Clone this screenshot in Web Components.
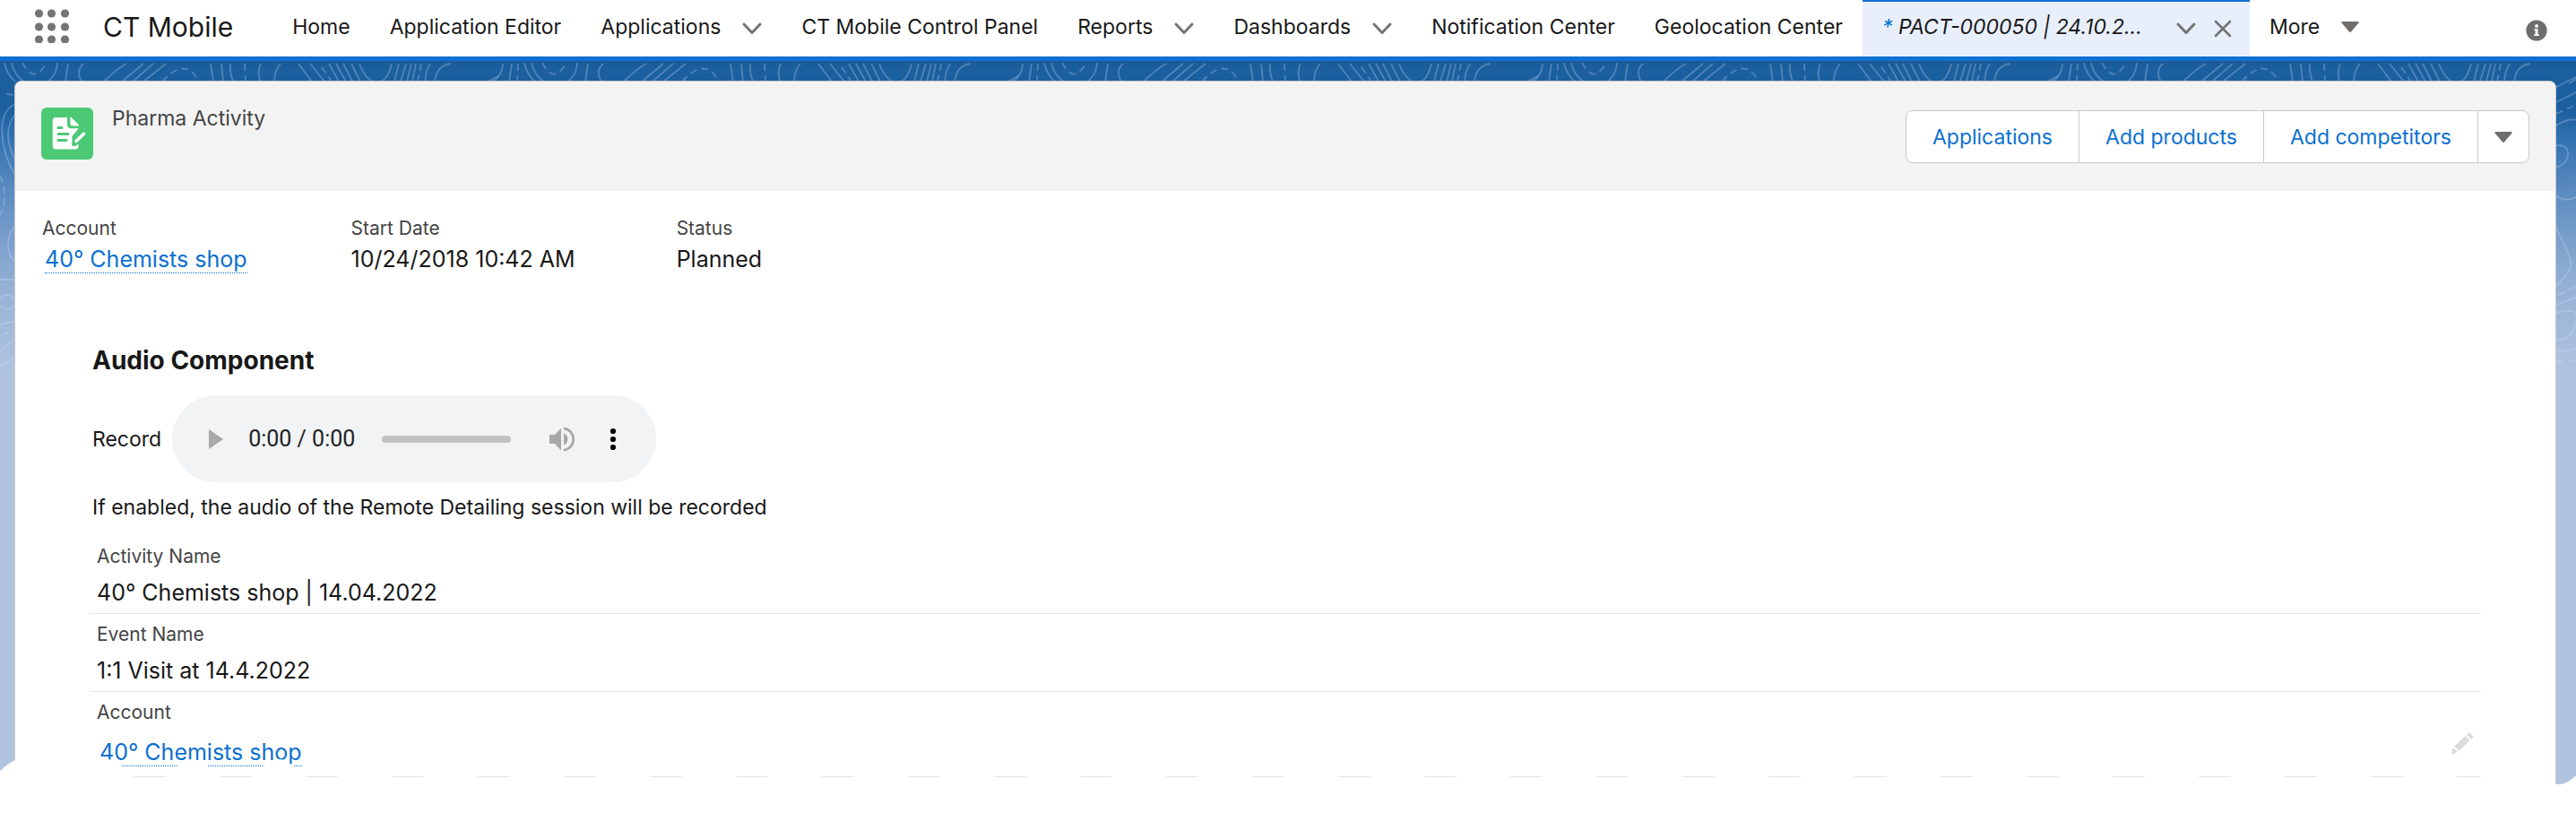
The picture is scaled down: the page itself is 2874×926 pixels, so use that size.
<!DOCTYPE html>
<html lang="en">
<head>
<meta charset="utf-8">
<title>CT Mobile</title>
<style>
  body { margin: 0; background: #fff; color: #181818; font-family: Inter, "Liberation Sans", sans-serif; font-size: 23px; }
</style>
</head>
<body>
<ct-app-bar>
  <ct-nav-item>Home</ct-nav-item>
  <ct-nav-item>Application Editor</ct-nav-item>
  <ct-nav-item menu>Applications</ct-nav-item>
  <ct-nav-item>CT Mobile Control Panel</ct-nav-item>
  <ct-nav-item menu>Reports</ct-nav-item>
  <ct-nav-item menu>Dashboards</ct-nav-item>
  <ct-nav-item>Notification Center</ct-nav-item>
  <ct-nav-item>Geolocation Center</ct-nav-item>
  <ct-nav-tab>PACT-000050 | 24.10.2...</ct-nav-tab>
  <ct-nav-more>More</ct-nav-more>
</ct-app-bar>
<ct-backdrop>
  <ct-record-card>
    <ct-record-header slot="header">
      <span slot="title">Pharma Activity</span>
      <ct-button-group slot="actions"></ct-button-group>
    </ct-record-header>
    <ct-summary slot="summary">
      <ct-summary-field><span slot="label">Account</span><ct-record-link>40° Chemists shop</ct-record-link></ct-summary-field>
      <ct-summary-field><span slot="label">Start Date</span>10/24/2018 10:42 AM</ct-summary-field>
      <ct-summary-field><span slot="label">Status</span>Planned</ct-summary-field>
    </ct-summary>
    <ct-audio-section>
      <span slot="heading">Audio Component</span>
      <span slot="label">Record</span>
      <ct-audio-player slot="player"></ct-audio-player>
      <span slot="hint">If enabled, the audio of the Remote Detailing session will be recorded</span>
    </ct-audio-section>
    <ct-detail-row><span slot="label">Activity Name</span>40° Chemists shop | 14.04.2022</ct-detail-row>
    <ct-detail-row><span slot="label">Event Name</span>1:1 Visit at 14.4.2022</ct-detail-row>
    <ct-detail-row editable><span slot="label">Account</span><ct-record-link>40° Chemists shop</ct-record-link></ct-detail-row>
  </ct-record-card>
</ct-backdrop>

<script>
const RESET = `
  :host, *, *::before, *::after { box-sizing: border-box; }
  button { font: inherit; color: inherit; background: none; border: 0; margin: 0; padding: 0; display: flex; align-items: center; justify-content: center; cursor: pointer; }
  a { color: inherit; text-decoration: none; }
  svg { display: block; }
`;

const CHEVRON = `<svg width="22" height="14" viewBox="0 0 22 14" fill="none" stroke="#747474" stroke-width="3" stroke-linecap="round" stroke-linejoin="round" aria-hidden="true"><path d="M2 2l9 9.5L20 2"/></svg>`;
const TRIANGLE = `<svg width="20" height="12" viewBox="0 0 20 12" fill="#706e6b" aria-hidden="true"><path d="M1.500 0h17c1.100 0 1.500 1 .8 1.800L11 11.500c-.6.6-1.400.6-2 0L.7 1.800C0 1 .4 0 1.500 0z"/></svg>`;

function define(name, markup) {
  const template = document.createElement('template');
  template.innerHTML = `<style>${RESET}</style>${markup}`;
  customElements.define(name, class extends HTMLElement {
    constructor() {
      super();
      this.attachShadow({ mode: 'open' }).append(template.content.cloneNode(true));
    }
  });
}

define('ct-app-bar', `
  <style>
    :host { display: block; border-bottom: 5px solid #1170d4; background: #fff; }
    header { display: flex; align-items: stretch; height: 63px; padding: 0 32px 0 38px; white-space: nowrap; }
    .launcher { align-self: center; padding-bottom: 6px; }
    h1 { margin: 0 44px 0 37px; font-size: 30px; line-height: 60px; font-weight: 400; }
    nav { display: flex; flex: 1; }
    .info { padding-top: 4px; }
  </style>
  <header>
    <button class="launcher" type="button" aria-label="App launcher">
      <svg width="40" height="38" viewBox="0 0 40 38" fill="#747474">
        <circle cx="5.500" cy="5" r="4.600"/><circle cx="19.500" cy="5" r="4.600"/><circle cx="34.500" cy="5" r="4.600"/>
        <circle cx="5.500" cy="20" r="4.600"/><circle cx="19.500" cy="20" r="4.600"/><circle cx="34.500" cy="20" r="4.600"/>
        <circle cx="5.500" cy="34" r="4.600"/><circle cx="19.500" cy="34" r="4.600"/><circle cx="34.500" cy="34" r="4.600"/>
      </svg>
    </button>
    <h1>CT Mobile</h1>
    <nav><slot></slot></nav>
    <button class="info" type="button" aria-label="Information">
      <svg width="24" height="24" viewBox="0 0 24 24"><circle cx="12" cy="12" r="11.600" fill="#706e6b"/><circle cx="12" cy="7" r="1.900" fill="#fff"/><path d="M9.500 10.200h4v6h1.300v1.800H9.200v-1.800h1.400v-4.200H9.500z" fill="#fff"/></svg>
    </button>
  </header>`);

define('ct-nav-item', `
  <style>
    :host { display: flex; padding: 0 22px; line-height: 60px; }
    button { display: none; height: 60px; padding-top: 3px; margin-left: 24px; }
    :host([menu]) button { display: flex; }
  </style>
  <a href="#"><slot></slot></a><button type="button" aria-label="Open menu">${CHEVRON}</button>`);

define('ct-nav-tab', `
  <style>
    :host { display: flex; width: 432px; padding: 0 20px 0 22px; background: #e8effb; border-top: 2px solid #1170d4; line-height: 56px; }
    a { flex: 1; font-style: italic; }
    .mark { color: #0176d3; }
    button { height: 58px; padding-top: 2px; margin-left: 20px; }
  </style>
  <a href="#"><span class="mark">*</span> <slot></slot></a>
  <button type="button" aria-label="Open menu">${CHEVRON}</button>
  <button type="button" aria-label="Close tab"><svg width="20" height="20" viewBox="0 0 20 20" stroke="#747474" stroke-width="2.600" stroke-linecap="round"><path d="M2 2l16 16M18 2L2 18"/></svg></button>`);

define('ct-nav-more', `
  <style>
    :host { display: flex; padding: 0 22px; line-height: 60px; }
    button { gap: 24px; height: 60px; line-height: 60px; }
  </style>
  <button type="button"><slot></slot>${TRIANGLE}</button>`);

/* Gradient with a repeating contour-line tile, finished by a scalloped lower edge. */
define('ct-backdrop', `
  <style>
    :host { display: block; position: relative; overflow: hidden; padding: 22px 22px 0 16px;
      background: linear-gradient(#1a5a96 0, #1b5f9e 10px, #1b5f9e 55px, #3473b1 90px, #5b8bc0 145px, #7da1cc 205px, #98b3d6 260px, #b0c4df 350px); }
    .contours { position: absolute; inset: 0; width: 100%; height: 100%; }
    .edge { position: absolute; left: 0; bottom: 0; width: 100%; height: 29px; }
    slot { display: block; position: relative; }
  </style>
  <svg class="contours" aria-hidden="true">
    <defs>
      <pattern id="tile" width="580" height="1200" patternUnits="userSpaceOnUse">
        <g transform="translate(0 -68)" fill="none" stroke="#d5e5ff" stroke-opacity=".27" stroke-width="1.800">
          <path d="M5 70Q7 82 17 91M13 70Q17 88 32 93M64 70Q63 86 50 93M76 71L73 91M93 71Q84 79 91 91M141 71Q130 77 116 91M160 71L136 91M171 71L148 91M185 71L160 91M235 71L238 91M247 71L249 91M257 71Q256 80 260 91M291 71Q287 80 290 91M313 71Q306 79 306 91M333 71L348 91M346 71L362 91M367 71L378 91M375 71L386 91M383 71L393 91M392 71L402 91M401 71C410 96 430 102 437 71M445 71L440 91M453 71L447 91M459 71L454 91M464 71L460 91M480 71Q475 79 474 91M503 71Q487 73 485 91M561 71Q560 87 546 93M571 71L568 91"/>
          <path stroke-dasharray="8 5" d="M25 70Q38 95 52 70M181 91Q207 62 222 91M273 71L274 91M359 75L370 91M470 71L466 91M578 71L577 91M7 105L16 106M0 196Q10 218 0 240M2 374L18 368M532 127L556 116M535 329L556 318M532 404L556 403"/>
          <path d="M18 116C-4 122-2 165 18 197M18 126Q0 148 18 180M18 252C6 260 6 287 18 292M0 312H16M-1 337A9 8 0 0 1 17 337A9 8 0 0 1-1 337M0 362L18 358M0 394Q8 382 18 379M0 408L18 398M530 98L556 85M530 115L556 102M530 141Q545 131 556 134M530 163C550 157 550 184 530 187M530 217Q542 227 556 219M530 249C540 276 550 285 548 297Q546 306 530 321M530 341L556 331M530 350C550 343 556 347 554 358C551 377 540 381 530 378M530 391Q545 393 556 388"/>
        </g>
      </pattern>
    </defs>
    <rect width="100%" height="100%" fill="url(#tile)"/>
  </svg>
  <slot></slot>
  <svg class="edge" aria-hidden="true">
    <defs>
      <pattern id="scallop" x="23" width="96" height="29" patternUnits="userSpaceOnUse">
        <path fill="#fff" d="M0 0C17 0 31 28 48 28C65 28 79 0 96 0V29H0z"/>
      </pattern>
    </defs>
    <rect width="100%" height="29" fill="url(#scallop)"/>
  </svg>`);

define('ct-record-card', `
  <style>
    :host { display: block; background: #fff; border: 1px solid #c9c7c5; border-bottom: 0; border-radius: 8px 8px 0 0; overflow: hidden; }
    .body { padding: 80px 83px 9px; }
  </style>
  <slot name="header"></slot>
  <slot name="summary"></slot>
  <div class="body"><slot></slot></div>`);

define('ct-record-header', `
  <style>
    :host { display: flex; align-items: flex-start; height: 122px; padding: 29px 29px 0; background: #f3f3f3; }
    .icon { flex: none; background: #4bc975; border-radius: 6px; }
    h2 { margin: -2px 0 0 21px; flex: 1; font-size: 23px; line-height: 28px; font-weight: 400; color: #444; }
    .actions { padding-top: 3px; }
  </style>
  <svg class="icon" width="58" height="58" viewBox="0 0 58 58" fill="#fff" aria-hidden="true">
    <path d="M16 11h13v7.500c0 3 1.600 4.800 4.500 4.800h8.300L34.500 32v7.500L36 41.200h5.500v2.300c0 1.800-1.200 3-3 3H16c-2 0-3.300-1.300-3.300-3.300V14.300c0-2 1.300-3.300 3.300-3.300z"/>
    <path d="M32.500 11.300c0-.7.700-.9 1.200-.4l8 8.200c.5.600.3 1.300-.4 1.300h-7c-1.200 0-1.800-.7-1.800-1.800z"/>
    <path d="M39 37.500l8.500-8.300" stroke="#fff" stroke-width="3.600" stroke-linecap="round"/>
    <g fill="none" stroke="#4bc975" stroke-width="3" stroke-linecap="round"><path d="M19 22.500h4M19 29.500h11M19 36.500h9"/><path d="M35.500 38.500l-.2 3.200 3.500.1" stroke-width="2"/></g>
  </svg>
  <h2><slot name="title"></slot></h2>
  <div class="actions"><slot name="actions"></slot></div>`);

define('ct-button-group', `
  <style>
    :host { display: flex; height: 59px; background: #fff; border: 1px solid #c9c9c9; border-radius: 8px; overflow: hidden; white-space: nowrap; }
    button { padding: 0 29px; color: #0b70d0; }
    button + button { border-left: 1px solid #c9c9c9; }
    button.more { padding: 0 18px; }
  </style>
  <button type="button">Applications</button>
  <button type="button">Add products</button>
  <button type="button">Add competitors</button>
  <button type="button" class="more" aria-label="More actions">${TRIANGLE}</button>`);

define('ct-summary', `
  <style>:host { display: flex; gap: 113px; padding: 29px 30px 0; }</style><slot></slot>`);

define('ct-summary-field', `
  <style>
    :host { display: block; font-size: 25px; line-height: 30px; }
    .label { margin-bottom: 6px; font-size: 21px; line-height: 26px; color: #444; }
    ::slotted(ct-record-link) { margin-top: 2px; }
  </style>
  <div class="label"><slot name="label"></slot></div>
  <slot></slot>`);

define('ct-record-link', `
  <style>
    :host { display: block; width: max-content; margin: 0 3px; }
    a { display: block; color: #0b70d0; border-bottom: 1px dotted #0b70d0; }
  </style>
  <a href="#"><slot></slot></a>`);

define('ct-audio-section', `
  <style>
    :host { display: block; padding: 0 3px 18px; }
    h3 { margin: 0 0 22px; font-size: 28px; line-height: 34px; font-weight: 700; }
    .line { display: flex; align-items: center; gap: 12px; }
    p { margin: 14px 0 0; line-height: 28px; }
  </style>
  <h3><slot name="heading"></slot></h3>
  <div class="line"><slot name="label"></slot><slot name="player"></slot></div>
  <p><slot name="hint"></slot></p>`);

define('ct-audio-player', `
  <style>
    :host { display: flex; align-items: center; width: 540px; height: 97px; padding: 0 44px 0 40px; border-radius: 49px; background: #f1f3f4; }
    .time { margin: 0 30px 0 27px; font-family: Roboto, sans-serif; font-size: 25px; color: #202124; white-space: nowrap; }
    input { appearance: none; flex: 1; min-width: 0; height: 8px; margin: 0; border-radius: 4px; background: #c0c2c4; }
    input::-webkit-slider-thumb { appearance: none; width: 0; height: 0; }
    .volume { margin: 0 39px 0 42px; }
  </style>
  <button type="button" aria-label="Play"><svg width="18" height="24" viewBox="0 0 18 24" fill="#a6a9aa"><path d="M1 1l16 11L1 23z"/></svg></button>
  <span class="time">0:00 / 0:00</span>
  <input type="range" min="0" max="100" value="0" aria-label="Seek">
  <button class="volume" type="button" aria-label="Mute"><svg width="29" height="30" viewBox="0 0 29 30" fill="#a6a9aa"><path d="M1 10h6l7-7.500v25L7 20H1zM17 8.500a7 7 0 0 1 0 13z"/><path d="M17 2.800a12.300 12.300 0 0 1 0 24.400" fill="none" stroke="#a6a9aa" stroke-width="2.800"/></svg></button>
  <button type="button" aria-label="More options"><svg width="8" height="28" viewBox="0 0 8 28" fill="#000"><circle cx="4" cy="5" r="3.100"/><circle cx="4" cy="14" r="3.100"/><circle cx="4" cy="23" r="3.100"/></svg></button>`);

define('ct-detail-row', `
  <style>
    :host { display: flex; align-items: flex-end; justify-content: space-between; padding: 10px 8px 8px; border-bottom: 1px solid #e5e5e5; font-size: 25px; line-height: 30px; }
    :host([editable]) { padding-bottom: 11px; }
    .label { margin-bottom: 12px; font-size: 21px; line-height: 26px; color: #444; }
    ::slotted(ct-record-link) { margin-top: 16px; }
    button { display: none; margin-bottom: 12px; }
    :host([editable]) button { display: flex; }
  </style>
  <div><div class="label"><slot name="label"></slot></div><slot></slot></div>
  <button type="button" aria-label="Edit Account"><svg width="26" height="26" viewBox="0 0 26 26" fill="#dddbda"><path d="M4.500 15.500L16.500 4l5 5L9.500 20.500zM18 2.700l1.800-1.800c.6-.6 1.400-.6 2 0l3 3c.6.6.6 1.400 0 2L23 7.700zM3 17l5 5-5.600 2.200c-.8.2-1.400-.3-1.200-1.200z"/></svg></button>`);
</script>
</body>
</html>
